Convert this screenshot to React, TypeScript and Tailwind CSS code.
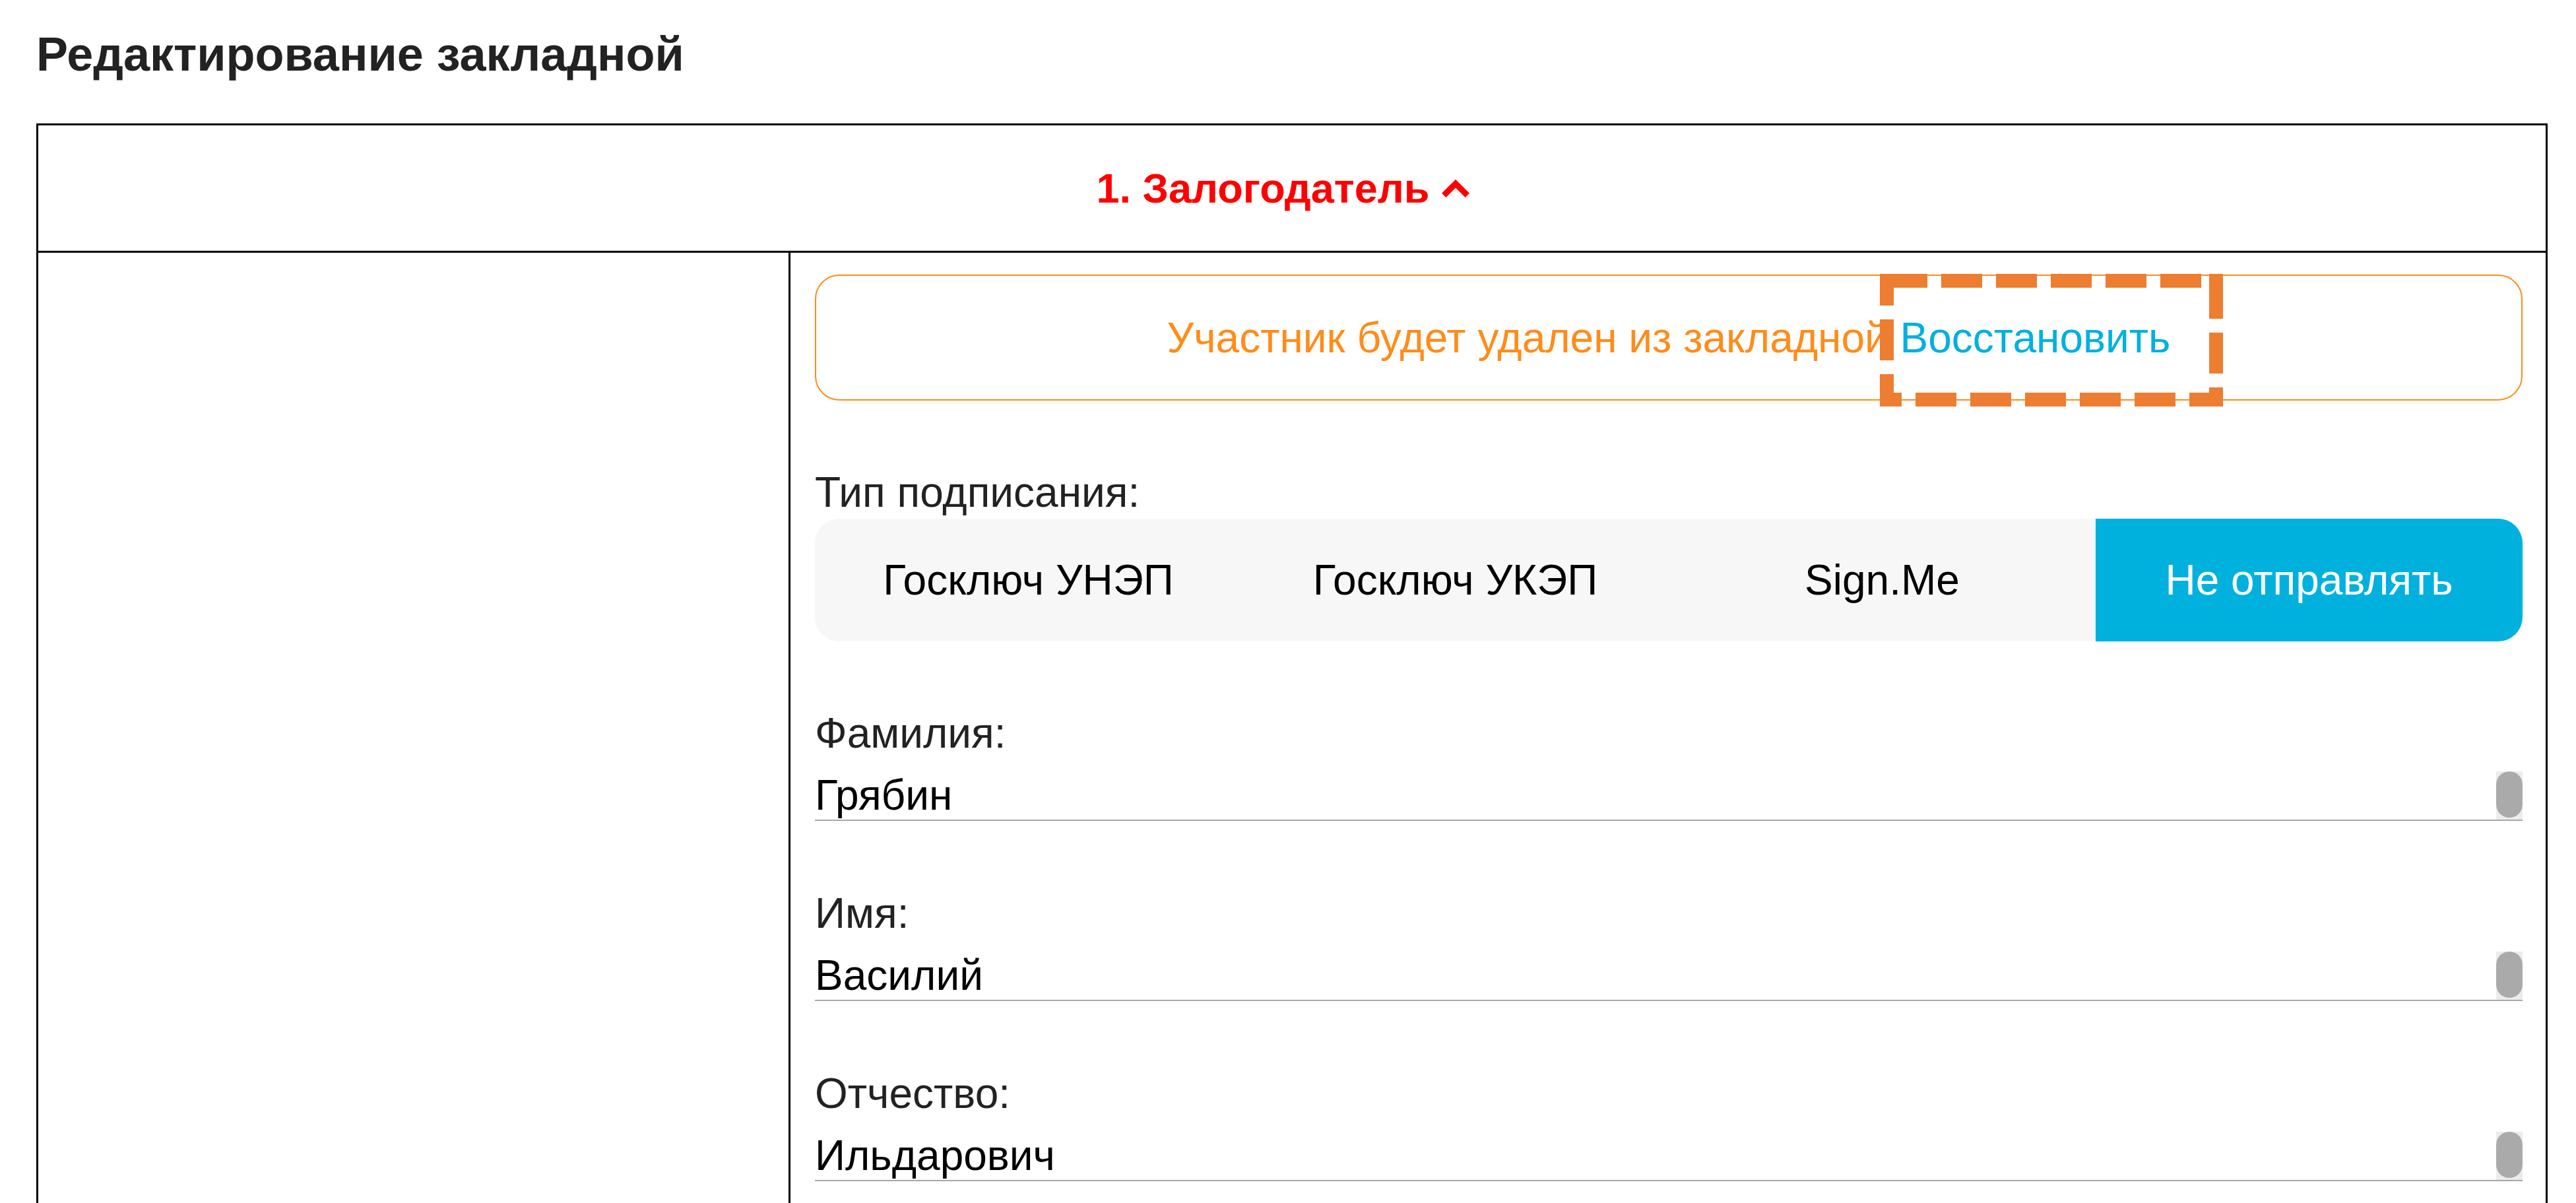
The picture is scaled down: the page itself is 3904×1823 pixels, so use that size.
import { useState } from 'react'

const SIGN_TYPES = ['Госключ УНЭП', 'Госключ УКЭП', 'Sign.Me', 'Не отправлять']

const FIELDS = [
  { label: 'Фамилия:', value: 'Грябин' },
  { label: 'Имя:', value: 'Василий' },
  { label: 'Отчество:', value: 'Ильдарович' },
]

export default function App() {
  const [signType, setSignType] = useState('Не отправлять')
  const [open, setOpen] = useState(true)

  return (
    <div className="relative h-[1823px] w-[3904px] overflow-hidden bg-white font-['Liberation_Sans',Arial,sans-serif] text-[#222]">
      <h1 className="flex h-[163px] items-center pl-[55px] text-[72px] font-bold leading-none">
        Редактирование закладной
      </h1>

      <div className="ml-[55px] mt-[24px] w-[3806px] border-[3px] border-black">
        {/* заголовок секции */}
        <button
          onClick={() => setOpen(!open)}
          className="flex h-[193px] w-full items-center justify-center border-b-[3px] border-black pr-[27px] text-[63px] font-bold leading-none text-[#ff0000]"
        >
          <span>1. Залогодатель</span>
          <svg width="42" height="27" viewBox="0 0 42 27" className="ml-[19px]">
            <path d="M3.2 24 L21 6.4 L38.8 24" fill="none" stroke="#ff0000" strokeWidth="9" />
          </svg>
        </button>

        <div className="grid min-h-[1600px] grid-cols-[1137px_1fr]">
          <div />
          <div className="border-l-[3px] border-black pl-[37px] pr-[35px] pt-[33px]">
            {/* плашка удаления */}
            <div className="flex h-[191px] items-center justify-center rounded-[37px] border-2 border-[#ff8c1a] text-[64px] leading-none text-[#ff8c1a]">
              <p>
                Участник будет удален из закладной <span className="cursor-pointer text-[#00b0e0]">Восстановить</span>
              </p>
            </div>

            {/* тип подписания */}
            <div className="mt-[103px] h-[72px] text-[64px] leading-[72px]">Тип подписания:</div>
            <div className="mt-[4px] grid h-[186px] grid-cols-4 overflow-hidden rounded-[37px] bg-[#f7f7f7] text-[64px]">
              {SIGN_TYPES.map(t => (
                <button
                  key={t}
                  onClick={() => setSignType(t)}
                  className={t === signType ? 'bg-[#00b1de] text-white' : 'text-black'}
                >
                  {t}
                </button>
              ))}
            </div>

            {/* ФИО */}
            {FIELDS.map((f, i) => (
              <div key={f.label} className={i === 0 ? 'mt-[103px]' : 'mt-[104px]'}>
                <div className="h-[72px] text-[64px] leading-[72px]">{f.label}</div>
                <div className="mt-[22px] flex h-[75px] border-b-2 border-[#a8a8a8]">
                  <div className="flex-1 text-[64px] leading-[73px] text-black">{f.value}</div>
                  <div className="w-[40px] bg-[#ececec]">
                    <div className="h-[70px] rounded-[20px] bg-[#aaaaaa]" />
                  </div>
                </div>
              </div>
            ))}
          </div>
        </div>
      </div>

      {/* выделение кнопки */}
      <svg className="pointer-events-none absolute left-0 top-0" width="3904" height="1823">
        <g stroke="#ed7d31" strokeWidth="21" fill="none">
          <line x1="2859" y1="425.5" x2="3348" y2="425.5" strokeDasharray="62 21" />
          <line x1="2859.5" y1="415" x2="2859.5" y2="616" strokeDasharray="48 21 62 21 62" />
          <line x1="2849" y1="605.5" x2="3369" y2="605.5" strokeDasharray="33 21 62 21 62 21 62 21 62 21 62 21 62" />
          <line x1="3358.5" y1="415" x2="3358.5" y2="616" strokeDasharray="68 21 62 21 62" />
        </g>
      </svg>
    </div>
  )
}
